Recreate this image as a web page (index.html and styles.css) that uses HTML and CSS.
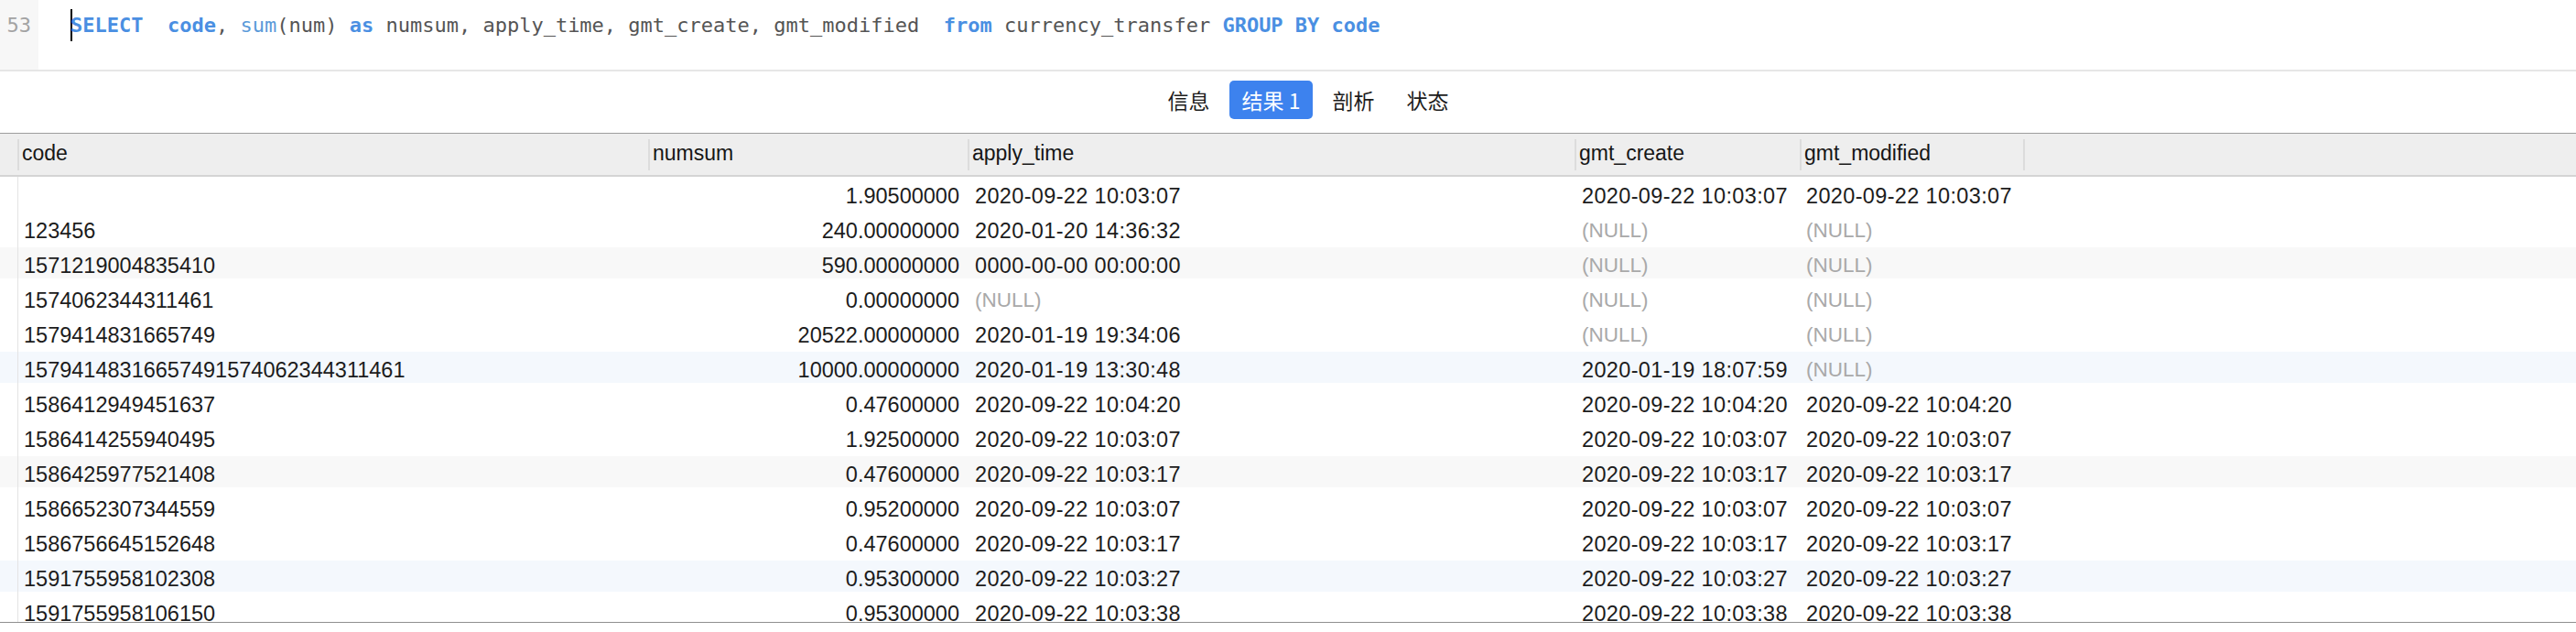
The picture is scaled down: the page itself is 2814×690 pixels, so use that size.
FILE: index.html
```html
<!DOCTYPE html>
<html lang="zh-CN">
<head>
<meta charset="utf-8">
<title>Query result</title>
<link rel="stylesheet" href="styles.css">
</head>
<body>
<div class="editor">
  <div class="gutter">53</div>
  <div class="code"><span class="caret"></span><span class="kw">SELECT</span>  <span class="kw">code</span>, <span class="fn">sum</span>(num) <span class="kw">as</span> numsum, apply_time, gmt_create, gmt_modified  <span class="kw">from</span> currency_transfer <span class="kw">GROUP BY code</span></div>
</div>
<div class="tabs">
  <div class="tab">信息</div>
  <div class="tab active">结果 1</div>
  <div class="tab">剖析</div>
  <div class="tab">状态</div>
</div>
<div class="table">
  <div class="row head">
    <div class="rh"></div>
    <div class="th">code</div>
    <div class="th">numsum</div>
    <div class="th">apply_time</div>
    <div class="th">gmt_create</div>
    <div class="th">gmt_modified</div>
    <div class="th"></div>
  </div>
  <div class="row tr">
    <div class="rh"></div><div class="td c-code"></div><div class="td c-num">1.90500000</div><div class="td c-apply dt">2020-09-22 10:03:07</div><div class="td c-create dt">2020-09-22 10:03:07</div><div class="td c-mod dt">2020-09-22 10:03:07</div><div></div>
  </div>
  <div class="row tr">
    <div class="rh"></div><div class="td c-code">123456</div><div class="td c-num">240.00000000</div><div class="td c-apply dt">2020-01-20 14:36:32</div><div class="td c-create null">(NULL)</div><div class="td c-mod null">(NULL)</div><div></div>
  </div>
  <div class="row tr grey">
    <div class="rh"></div><div class="td c-code">1571219004835410</div><div class="td c-num">590.00000000</div><div class="td c-apply dt">0000-00-00 00:00:00</div><div class="td c-create null">(NULL)</div><div class="td c-mod null">(NULL)</div><div></div>
  </div>
  <div class="row tr">
    <div class="rh"></div><div class="td c-code">1574062344311461</div><div class="td c-num">0.00000000</div><div class="td c-apply null">(NULL)</div><div class="td c-create null">(NULL)</div><div class="td c-mod null">(NULL)</div><div></div>
  </div>
  <div class="row tr">
    <div class="rh"></div><div class="td c-code">1579414831665749</div><div class="td c-num">20522.00000000</div><div class="td c-apply dt">2020-01-19 19:34:06</div><div class="td c-create null">(NULL)</div><div class="td c-mod null">(NULL)</div><div></div>
  </div>
  <div class="row tr blue">
    <div class="rh"></div><div class="td c-code">15794148316657491574062344311461</div><div class="td c-num">10000.00000000</div><div class="td c-apply dt">2020-01-19 13:30:48</div><div class="td c-create dt">2020-01-19 18:07:59</div><div class="td c-mod null">(NULL)</div><div></div>
  </div>
  <div class="row tr">
    <div class="rh"></div><div class="td c-code">1586412949451637</div><div class="td c-num">0.47600000</div><div class="td c-apply dt">2020-09-22 10:04:20</div><div class="td c-create dt">2020-09-22 10:04:20</div><div class="td c-mod dt">2020-09-22 10:04:20</div><div></div>
  </div>
  <div class="row tr">
    <div class="rh"></div><div class="td c-code">1586414255940495</div><div class="td c-num">1.92500000</div><div class="td c-apply dt">2020-09-22 10:03:07</div><div class="td c-create dt">2020-09-22 10:03:07</div><div class="td c-mod dt">2020-09-22 10:03:07</div><div></div>
  </div>
  <div class="row tr grey">
    <div class="rh"></div><div class="td c-code">1586425977521408</div><div class="td c-num">0.47600000</div><div class="td c-apply dt">2020-09-22 10:03:17</div><div class="td c-create dt">2020-09-22 10:03:17</div><div class="td c-mod dt">2020-09-22 10:03:17</div><div></div>
  </div>
  <div class="row tr">
    <div class="rh"></div><div class="td c-code">1586652307344559</div><div class="td c-num">0.95200000</div><div class="td c-apply dt">2020-09-22 10:03:07</div><div class="td c-create dt">2020-09-22 10:03:07</div><div class="td c-mod dt">2020-09-22 10:03:07</div><div></div>
  </div>
  <div class="row tr">
    <div class="rh"></div><div class="td c-code">1586756645152648</div><div class="td c-num">0.47600000</div><div class="td c-apply dt">2020-09-22 10:03:17</div><div class="td c-create dt">2020-09-22 10:03:17</div><div class="td c-mod dt">2020-09-22 10:03:17</div><div></div>
  </div>
  <div class="row tr blue">
    <div class="rh"></div><div class="td c-code">1591755958102308</div><div class="td c-num">0.95300000</div><div class="td c-apply dt">2020-09-22 10:03:27</div><div class="td c-create dt">2020-09-22 10:03:27</div><div class="td c-mod dt">2020-09-22 10:03:27</div><div></div>
  </div>
  <div class="row tr">
    <div class="rh"></div><div class="td c-code">1591755958106150</div><div class="td c-num">0.95300000</div><div class="td c-apply dt">2020-09-22 10:03:38</div><div class="td c-create dt">2020-09-22 10:03:38</div><div class="td c-mod dt">2020-09-22 10:03:38</div><div></div>
  </div>
</div>
</body>
</html>
```

FILE: styles.css
```css
* { box-sizing: border-box; }
html, body { margin: 0; padding: 0; background: #fff; }
body {
  width: 2814px;
  height: 690px;
  overflow: hidden;
  font-family: "Liberation Sans", Arial, sans-serif;
  color: #1c1c1c;
}

/* SQL editor */
.editor {
  display: flex;
  height: 78px;
  border-bottom: 2px solid #e6e6e6;
}
.gutter {
  width: 42px;
  background: #f7f7f7;
  padding: 10px 8px 0 0;
  text-align: right;
  font-family: "DejaVu Sans Mono", monospace;
  font-size: 22px;
  line-height: 36px;
  color: #a3a3a3;
}
.code {
  padding: 10px 0 0 35px;
  font-family: "DejaVu Sans Mono", monospace;
  font-size: 22px;
  line-height: 36px;
  color: #555;
  white-space: pre;
}
.caret {
  display: inline-block;
  width: 2px;
  height: 35px;
  margin-right: -2px;
  vertical-align: top;
  background: #000;
}
.kw { color: #4a8fe2; font-weight: bold; }
.fn { color: #5a9ad9; }

/* result tabs */
.tabs {
  display: flex;
  justify-content: center;
  align-items: flex-start;
  gap: 7px;
  height: 67px;
  padding: 10px 0 0 44px;
}
.tab {
  height: 42px;
  padding: 0 14px;
  border-radius: 5px;
  font-family: "Noto Sans CJK SC", "Noto Sans", sans-serif;
  font-size: 23px;
  line-height: 42px;
  color: #1c1c1c;
}
.tab.active { background: #3d82ee; color: #fff; }

/* grid */
.table {
  height: 535px;
  border-top: 1px solid #9d9d9d;
  border-bottom: 1px solid #8f8f8f;
  overflow: hidden;
}
.row {
  display: grid;
  grid-template-columns: 19px 689px 349px 663px 246px 244px 1fr;
}
.head {
  height: 47px;
  padding-top: 6px;
  background: #eeeeee;
  border-bottom: 2px solid #d4d4d4;
}
.th {
  height: 34px;
  line-height: 30px;
  padding-left: 3px;
  border-left: 2px solid #dcdcdc;
  font-size: 23px;
  color: #161616;
  white-space: nowrap;
}
.tr { height: 38px; }
.tr.grey {
  background: linear-gradient(to bottom, transparent 1px, #f8f8f8 1px, #f8f8f8 35px, transparent 35px);
}
.tr.blue {
  background: linear-gradient(to bottom, transparent 1px, #f4f8fd 1px, #f4f8fd 35px, transparent 35px);
}
.td {
  height: 38px;
  line-height: 34px;
  padding: 4px 8px 0 8px;
  font-size: 23.5px;
  color: #1c1c1c;
  white-space: nowrap;
  overflow: hidden;
}
.c-code { border-left: 1px solid #e4e4e4; padding-left: 6px; }
.c-num { text-align: right; padding-right: 9px; }
.c-mod { padding-left: 7px; }
.dt { letter-spacing: 0.35px; }
.null { color: #a9a9a9; font-size: 22.5px; }
```
